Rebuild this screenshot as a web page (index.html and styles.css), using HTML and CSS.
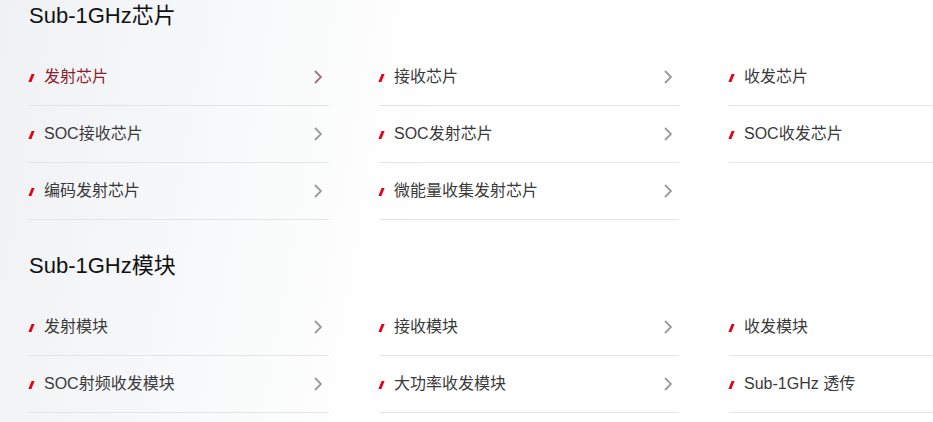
FILE: index.html
```html
<!DOCTYPE html>
<html lang="zh-CN">
<head>
<meta charset="utf-8">
<title>Sub-1GHz</title>
<link rel="stylesheet" href="styles.css">
</head>
<body>
<div class="page">
  <section class="group">
    <h2 class="group-title">Sub-1GHz芯片</h2>
    <ul class="grid">
      <li class="item active"><span class="mark"></span><span class="label">发射芯片</span><svg class="chev" viewBox="0 0 8 14"><polyline points="1,1 7,7 1,13"/></svg></li>
      <li class="item"><span class="mark"></span><span class="label">接收芯片</span><svg class="chev" viewBox="0 0 8 14"><polyline points="1,1 7,7 1,13"/></svg></li>
      <li class="item"><span class="mark"></span><span class="label">收发芯片</span><svg class="chev" viewBox="0 0 8 14"><polyline points="1,1 7,7 1,13"/></svg></li>
      <li class="item"><span class="mark"></span><span class="label">SOC接收芯片</span><svg class="chev" viewBox="0 0 8 14"><polyline points="1,1 7,7 1,13"/></svg></li>
      <li class="item"><span class="mark"></span><span class="label">SOC发射芯片</span><svg class="chev" viewBox="0 0 8 14"><polyline points="1,1 7,7 1,13"/></svg></li>
      <li class="item"><span class="mark"></span><span class="label">SOC收发芯片</span><svg class="chev" viewBox="0 0 8 14"><polyline points="1,1 7,7 1,13"/></svg></li>
      <li class="item"><span class="mark"></span><span class="label">编码发射芯片</span><svg class="chev" viewBox="0 0 8 14"><polyline points="1,1 7,7 1,13"/></svg></li>
      <li class="item"><span class="mark"></span><span class="label">微能量收集发射芯片</span><svg class="chev" viewBox="0 0 8 14"><polyline points="1,1 7,7 1,13"/></svg></li>
    </ul>
  </section>
  <section class="group">
    <h2 class="group-title">Sub-1GHz模块</h2>
    <ul class="grid">
      <li class="item"><span class="mark"></span><span class="label">发射模块</span><svg class="chev" viewBox="0 0 8 14"><polyline points="1,1 7,7 1,13"/></svg></li>
      <li class="item"><span class="mark"></span><span class="label">接收模块</span><svg class="chev" viewBox="0 0 8 14"><polyline points="1,1 7,7 1,13"/></svg></li>
      <li class="item"><span class="mark"></span><span class="label">收发模块</span><svg class="chev" viewBox="0 0 8 14"><polyline points="1,1 7,7 1,13"/></svg></li>
      <li class="item"><span class="mark"></span><span class="label">SOC射频收发模块</span><svg class="chev" viewBox="0 0 8 14"><polyline points="1,1 7,7 1,13"/></svg></li>
      <li class="item"><span class="mark"></span><span class="label">大功率收发模块</span><svg class="chev" viewBox="0 0 8 14"><polyline points="1,1 7,7 1,13"/></svg></li>
      <li class="item"><span class="mark"></span><span class="label">Sub-1GHz 透传</span><svg class="chev" viewBox="0 0 8 14"><polyline points="1,1 7,7 1,13"/></svg></li>
    </ul>
  </section>
</div>
</body>
</html>
```

FILE: styles.css
```css
html, body {
  margin: 0;
  padding: 0;
}
body {
  width: 933px;
  height: 422px;
  overflow: hidden;
  background: linear-gradient(100deg, #f0f1f4 0%, #f7f8f9 22%, #ffffff 45%, #ffffff 100%);
  font-family: "Liberation Sans", "Noto Sans CJK SC", Arial, sans-serif;
}
.page {
  padding-left: 29px;
  width: 904px;
  overflow: hidden;
}
.group + .group {
  margin-top: 30px;
}
.group-title {
  margin: 0 0 17px 0;
  font-size: 22px;
  line-height: 32px;
  font-weight: normal;
  color: #111;
}
.grid {
  list-style: none;
  margin: 0;
  padding: 0;
  display: grid;
  grid-template-columns: repeat(3, 300px);
  column-gap: 50px;
}
.item {
  height: 56px;
  border-bottom: 1px solid #e4e4e4;
  display: flex;
  align-items: center;
  font-size: 16px;
  color: #3a3a3a;
}
.mark {
  width: 3px;
  height: 8px;
  background: #e60012;
  transform: skewX(-22deg);
  margin-left: 1px;
  margin-right: 11px;
  flex: none;
  position: relative;
  top: 1px;
}
.label {
  flex: 1;
  line-height: 20px;
}
.chev {
  width: 8px;
  height: 14px;
  margin-right: 7px;
  flex: none;
}
.chev polyline {
  fill: none;
  stroke: #9a9a9a;
  stroke-width: 1.8;
}
.item.active {
  color: #8a1f2e;
}
.item.active .chev polyline {
  stroke: #9a737c;
}
```
